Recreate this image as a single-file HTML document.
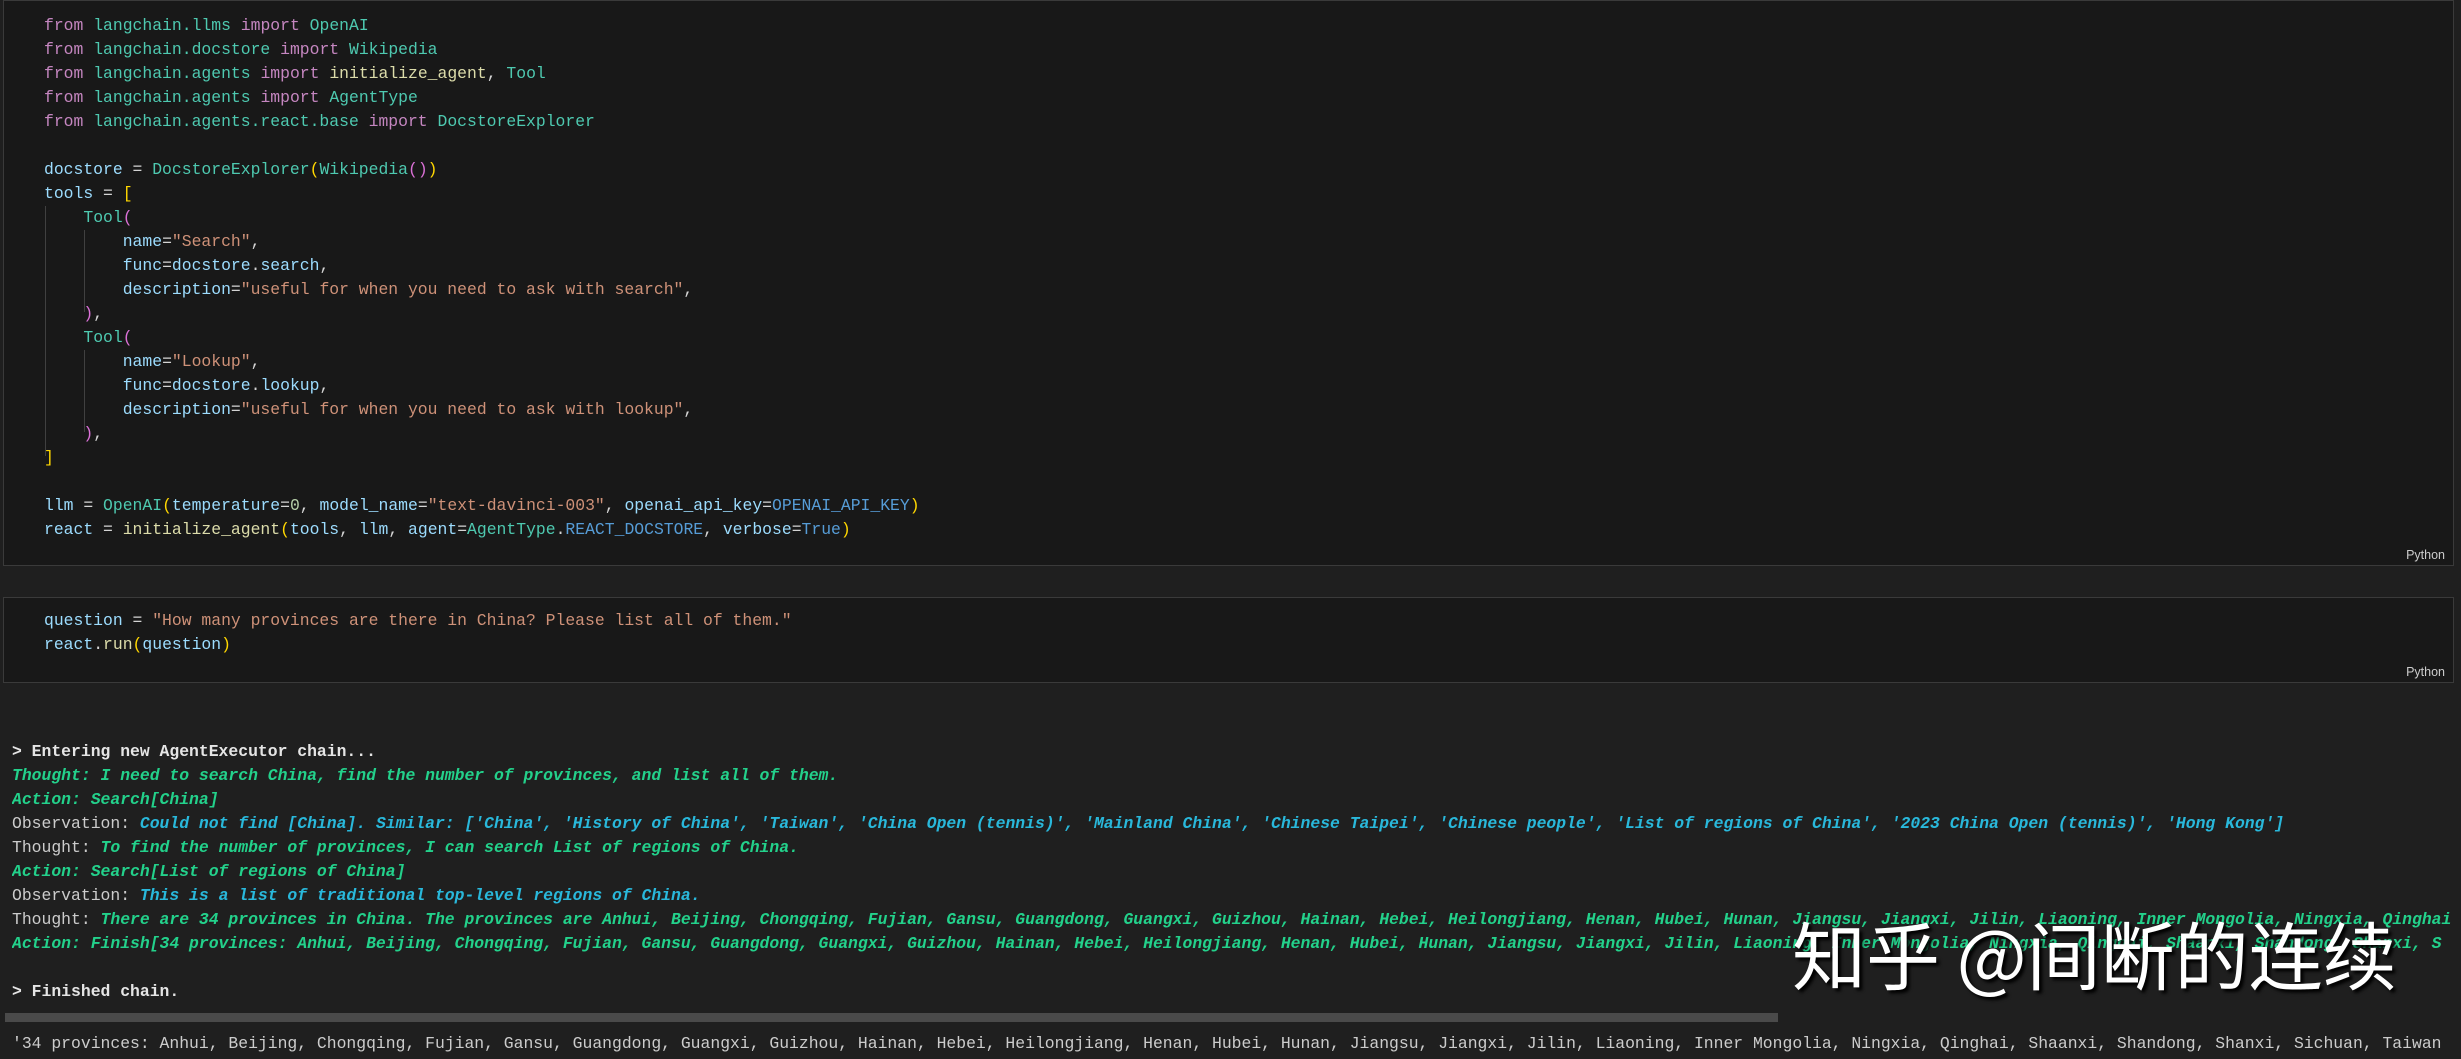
<!DOCTYPE html>
<html><head><meta charset="utf-8"><style>
html,body{margin:0;padding:0;width:2461px;height:1059px;overflow:hidden;background:#1f1f1f;}
.cell{position:absolute;left:3px;width:2451px;background:#181818;border:1px solid #3a3a3a;box-sizing:border-box;}
pre{margin:0;font-family:"Liberation Mono",monospace;font-size:16.4px;line-height:24px;color:#d4d4d4;white-space:pre;position:absolute;}
.code{left:40px;}
.k{color:#c586c0}.m{color:#4ec9b0}.v{color:#9cdcfe}.f{color:#dcdcaa}.s{color:#ce9178}.y{color:#ffd700}.p{color:#da70d6}.n{color:#b5cea8}.c{color:#569cd6}
.lab{position:absolute;right:8px;font-family:"Liberation Sans",sans-serif;font-size:12.5px;color:#cccccc;}
.guide{position:absolute;width:1px;background:#404040;}
#out{left:12px;top:740px;color:#cccccc;width:2449px;overflow:hidden;}
.b{font-weight:bold;color:#e5e5e5}.g{color:#23d18b;font-style:italic;font-weight:bold}.cy{color:#29b8db;font-style:italic;font-weight:bold}
.sb{position:absolute;left:5px;top:1013px;width:1773px;height:9px;background:#4a4a4a;}
.wm{position:absolute;left:1792px;top:905px;font-family:"Noto Sans CJK SC","WenQuanYi Zen Hei",sans-serif;font-size:74px;line-height:96px;color:#fff;text-shadow:3px 3px 3px #000;white-space:nowrap;}
</style></head><body>
<div class="cell" style="top:0;height:566px;">
<div class="guide" style="left:41px;top:205px;height:250px"></div>
<div class="guide" style="left:80px;top:229px;height:82px"></div>
<div class="guide" style="left:80px;top:349px;height:82px"></div>
<pre class="code" style="top:13px;left:40px"><span class="k">from</span> <span class="m">langchain.llms</span> <span class="k">import</span> <span class="m">OpenAI</span>
<span class="k">from</span> <span class="m">langchain.docstore</span> <span class="k">import</span> <span class="m">Wikipedia</span>
<span class="k">from</span> <span class="m">langchain.agents</span> <span class="k">import</span> <span class="f">initialize_agent</span>, <span class="m">Tool</span>
<span class="k">from</span> <span class="m">langchain.agents</span> <span class="k">import</span> <span class="m">AgentType</span>
<span class="k">from</span> <span class="m">langchain.agents.react.base</span> <span class="k">import</span> <span class="m">DocstoreExplorer</span>

<span class="v">docstore</span> = <span class="m">DocstoreExplorer</span><span class="y">(</span><span class="m">Wikipedia</span><span class="p">()</span><span class="y">)</span>
<span class="v">tools</span> = <span class="y">[</span>
    <span class="m">Tool</span><span class="p">(</span>
        <span class="v">name</span>=<span class="s">"Search"</span>,
        <span class="v">func</span>=<span class="v">docstore</span>.<span class="v">search</span>,
        <span class="v">description</span>=<span class="s">"useful for when you need to ask with search"</span>,
    <span class="p">)</span>,
    <span class="m">Tool</span><span class="p">(</span>
        <span class="v">name</span>=<span class="s">"Lookup"</span>,
        <span class="v">func</span>=<span class="v">docstore</span>.<span class="v">lookup</span>,
        <span class="v">description</span>=<span class="s">"useful for when you need to ask with lookup"</span>,
    <span class="p">)</span>,
<span class="y">]</span>

<span class="v">llm</span> = <span class="m">OpenAI</span><span class="y">(</span><span class="v">temperature</span>=<span class="n">0</span>, <span class="v">model_name</span>=<span class="s">"text-davinci-003"</span>, <span class="v">openai_api_key</span>=<span class="c">OPENAI_API_KEY</span><span class="y">)</span>
<span class="v">react</span> = <span class="f">initialize_agent</span><span class="y">(</span><span class="v">tools</span>, <span class="v">llm</span>, <span class="v">agent</span>=<span class="m">AgentType</span>.<span class="c">REACT_DOCSTORE</span>, <span class="v">verbose</span>=<span class="c">True</span><span class="y">)</span></pre>
<div class="lab" style="top:547px">Python</div>
</div>
<div class="cell" style="top:597px;height:86px;">
<pre class="code" style="top:11px;left:40px"><span class="v">question</span> = <span class="s">"How many provinces are there in China? Please list all of them."</span>
<span class="v">react</span>.<span class="f">run</span><span class="y">(</span><span class="v">question</span><span class="y">)</span></pre>
<div class="lab" style="top:67px">Python</div>
</div>
<pre id="out"><span class="b">&gt; Entering new AgentExecutor chain...</span>
<span class="g">Thought: I need to search China, find the number of provinces, and list all of them.</span>
<span class="g">Action: Search[China]</span>
Observation: <span class="cy">Could not find [China]. Similar: ['China', 'History of China', 'Taiwan', 'China Open (tennis)', 'Mainland China', 'Chinese Taipei', 'Chinese people', 'List of regions of China', '2023 China Open (tennis)', 'Hong Kong']</span>
Thought: <span class="g">To find the number of provinces, I can search List of regions of China.</span>
<span class="g">Action: Search[List of regions of China]</span>
Observation: <span class="cy">This is a list of traditional top-level regions of China.</span>
Thought: <span class="g">There are 34 provinces in China. The provinces are Anhui, Beijing, Chongqing, Fujian, Gansu, Guangdong, Guangxi, Guizhou, Hainan, Hebei, Heilongjiang, Henan, Hubei, Hunan, Jiangsu, Jiangxi, Jilin, Liaoning, Inner Mongolia, Ningxia, Qinghai</span>
<span class="g">Action: Finish[34 provinces: Anhui, Beijing, Chongqing, Fujian, Gansu, Guangdong, Guangxi, Guizhou, Hainan, Hebei, Heilongjiang, Henan, Hubei, Hunan, Jiangsu, Jiangxi, Jilin, Liaoning, Inner Mongolia, Ningxia, Qinghai, Shaanxi, Shandong, Shanxi, S</span>

<span class="b">&gt; Finished chain.</span></pre>
<div class="sb"></div>
<pre style="left:12px;top:1032px;color:#cccccc">'34 provinces: Anhui, Beijing, Chongqing, Fujian, Gansu, Guangdong, Guangxi, Guizhou, Hainan, Hebei, Heilongjiang, Henan, Hubei, Hunan, Jiangsu, Jiangxi, Jilin, Liaoning, Inner Mongolia, Ningxia, Qinghai, Shaanxi, Shandong, Shanxi, Sichuan, Taiwan</pre>
<div class="wm">知乎 @间断的连续</div>
</body></html>
